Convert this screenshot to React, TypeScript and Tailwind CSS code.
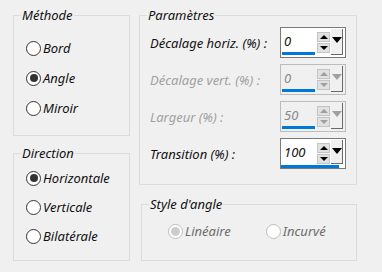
import { FC, ReactNode } from "react";

const font = { fontFamily: '"Noto Sans", "Open Sans", sans-serif' };

const Radio: FC<{ label: string; checked?: boolean; disabled?: boolean }> = ({
  label,
  checked = false,
  disabled = false,
}) => (
  <label className="flex items-center gap-[2px] h-[16px]">
    <span
      className={
        disabled
          ? "flex items-center justify-center w-[15px] h-[15px] rounded-full border border-[#bcbcbc] bg-white"
          : "flex items-center justify-center w-[15px] h-[15px] rounded-full border border-[#333333] bg-white"
      }
    >
      {checked && (
        <span
          className={
            disabled
              ? "w-[9px] h-[9px] rounded-full bg-[#cccccc]"
              : "w-[8px] h-[8px] rounded-full bg-[#333333]"
          }
        />
      )}
    </span>
    <span className={disabled ? "text-[#6d6d6d]" : "text-[#111111]"}>{label}</span>
  </label>
);

// padding goes on the inner div: fieldset padding would also push the legend
const Group: FC<{ title: string; className?: string; inner?: string; children: ReactNode }> = ({
  title,
  className = "",
  inner = "",
  children,
}) => (
  <fieldset className={`border border-[#dcdcdc] ${className}`}>
    <legend className="ml-[7px] px-[1px] leading-[16px] text-[#111111]">{title}</legend>
    <div className={inner}>{children}</div>
  </fieldset>
);

const Spin: FC<{ value: string; disabled?: boolean; focused?: boolean }> = ({
  value,
  disabled = false,
  focused = false,
}) => (
  <div
    className={
      disabled
        ? "relative flex w-[66px] h-[31px] border border-[#bcbcbc] bg-[#f0f0f0] p-[1px]"
        : "relative flex w-[66px] h-[31px] border border-[#7a7a7a] bg-white p-[1px]"
    }
  >
    <div className="flex flex-col w-[33px]">
      <div
        className={
          disabled
            ? "flex-1 pl-[2px] pt-[3px] leading-[18px] text-[#8a8a8a]"
            : "flex-1 pl-[2px] pt-[3px] leading-[18px] text-[#111111]"
        }
      >
        {value}
      </div>
      {!focused && <div className="h-[3px] bg-[#0078d7] mb-[1px]" />}
    </div>
    <div className="flex flex-col gap-[1px] ml-[2px] mt-[3px] w-[13px]">
      <div className="flex items-center justify-center h-[10px] bg-[#e1e1e1] border border-[#c4c4c4]">
        <span
          className={
            disabled
              ? "w-0 h-0 border-x-[4px] border-x-transparent border-b-[4px] border-b-[#a0a0a0]"
              : "w-0 h-0 border-x-[4px] border-x-transparent border-b-[4px] border-b-black"
          }
        />
      </div>
      <div className="flex items-center justify-center h-[10px] bg-[#e1e1e1] border border-[#c4c4c4]">
        <span
          className={
            disabled
              ? "w-0 h-0 border-x-[4px] border-x-transparent border-t-[4px] border-t-[#a0a0a0]"
              : "w-0 h-0 border-x-[4px] border-x-transparent border-t-[4px] border-t-black"
          }
        />
      </div>
    </div>
    <div
      className={
        focused
          ? "flex justify-center ml-[1px] w-[12px] h-[24px] bg-[#f0f0f0] border-r border-b border-[#696969] pt-[8px]"
          : "flex justify-center ml-[1px] w-[12px] h-[26px] bg-[#f0f0f0] border-r border-b border-[#696969] pt-[8px]"
      }
    >
      <span
        className={
          disabled
            ? "w-0 h-0 border-x-[5px] border-x-transparent border-t-[6px] border-t-[#a0a0a0]"
            : "w-0 h-0 border-x-[5px] border-x-transparent border-t-[6px] border-t-black"
        }
      />
    </div>
    {focused && <div className="absolute left-0 right-[6px] bottom-0 h-[3px] bg-[#0078d7]" />}
  </div>
);

const Row: FC<{ label: string; value: string; disabled?: boolean; focused?: boolean }> = ({
  label,
  value,
  disabled,
  focused,
}) => (
  <div className="flex items-center justify-between h-[31px]">
    <span className={disabled ? "text-[#a0a0a0]" : "text-[#111111]"}>{label}</span>
    <Spin value={value} disabled={disabled} focused={focused} />
  </div>
);

export default function App() {
  return (
    <div
      className="w-[382px] h-[272px] bg-[#f0f0f0] italic text-[13px] leading-[16px] flex gap-[9px] pl-[13px] pt-[7px]"
      style={font}
    >
      <div className="flex flex-col gap-[9px] w-[117px]">
        <Group title="Méthode" className="h-[129px]" inner="flex flex-col gap-[14px] pl-[12px] pt-[17px]">
          <Radio label="Bord" />
          <Radio label="Angle" checked />
          <Radio label="Miroir" />
        </Group>
        <Group title="Direction" className="h-[116px]" inner="flex flex-col gap-[13px] pl-[12px] pt-[9px]">
          <Radio label="Horizontale" checked />
          <Radio label="Verticale" />
          <Radio label="Bilatérale" />
        </Group>
      </div>
      <div className="flex flex-col gap-[11px] w-[218px]">
        <Group title="Paramètres" className="h-[178px]" inner="flex flex-col gap-[6px] px-[10px] pt-[4px]">
          <Row label="Décalage horiz. (%) :" value="0" />
          <Row label="Décalage vert. (%) :" value="0" disabled />
          <Row label="Largeur (%) :" value="50" disabled />
          <Row label="Transition (%) :" value="100" focused />
        </Group>
        <Group title="Style d'angle" className="h-[65px] ml-[2px]" inner="flex gap-[35px] pl-[26px] pt-[11px]">
          <Radio label="Linéaire" checked disabled />
          <Radio label="Incurvé" disabled />
        </Group>
      </div>
    </div>
  );
}
